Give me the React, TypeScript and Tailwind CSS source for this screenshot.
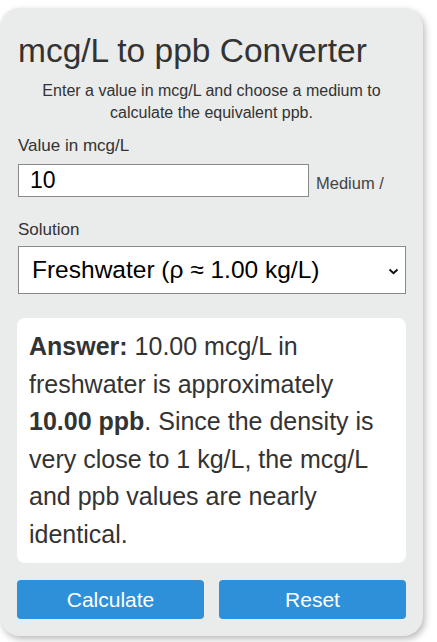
import React from "react";

export default function App() {
  return (
    <div className="w-[437px] h-[642px] bg-white pt-2" style={{ fontFamily: '"Liberation Sans", Arial, sans-serif' }}>
      <div className="w-[423px] h-[628px] rounded-[20px] bg-[#eaebeb] shadow-[2px_3px_7px_rgba(0,0,0,0.28)] px-[17px] pt-[23px]">
        <h1 className="pl-[1px] text-[33.5px] leading-[40px] text-[#333]">mcg/L to ppb Converter</h1>
        <p className="mt-[9px] text-center text-[16px] leading-[22px] text-[#333]">
          Enter a value in mcg/L and choose a medium to calculate the equivalent ppb.
        </p>
        <div className="mt-[12px] pl-[1px] text-[17px] leading-[20px] text-[#333]">Value in mcg/L</div>
        <div className="mt-[8px] flex items-end">
          <input
            defaultValue="10"
            className="ml-[1px] w-[291px] h-[33px] border border-[#8a8a8a] bg-white pl-[11px] text-[23px] text-black outline-none"
            style={{ fontFamily: '"Liberation Sans", Arial, sans-serif' }}
          />
          <span className="ml-[7px] mb-[4px] text-[16.5px] leading-[20px] text-[#444]">Medium /</span>
        </div>
        <div className="mt-[23px] pl-[1px] text-[17px] leading-[20px] text-[#333]">Solution</div>
        <div className="mt-[6px] ml-[1px] relative w-[388px] h-[48px] border border-[#8a8a8a] bg-white flex items-center">
          <span className="pl-[13px] text-[24.5px] text-black">Freshwater (ρ ≈ 1.00 kg/L)</span>
          <svg className="absolute right-[6px] top-[21px]" width="11" height="7" viewBox="0 0 11 7">
            <path d="M1.5 1.5 L5.5 5.2 L9.5 1.5" stroke="#111" strokeWidth="2" fill="none" />
          </svg>
        </div>
        <div className="mt-[24px] w-[389px] h-[245px] rounded-[8px] bg-white pl-[12px] pr-[12px] pt-[10px] text-[25px] leading-[37.5px] text-[#333]">
          <b>Answer:</b> 10.00 mcg/L in freshwater is approximately <b>10.00 ppb</b>. Since the density is very close to 1 kg/L, the mcg/L and ppb values are nearly identical.
        </div>
        <div className="mt-[17px] flex gap-[15px]">
          <button className="w-[187px] h-[39px] rounded-[4px] bg-[#2e90d9] text-white text-[21px]">Calculate</button>
          <button className="w-[187px] h-[39px] rounded-[4px] bg-[#2e90d9] text-white text-[21px]">Reset</button>
        </div>
      </div>
    </div>
  );
}
